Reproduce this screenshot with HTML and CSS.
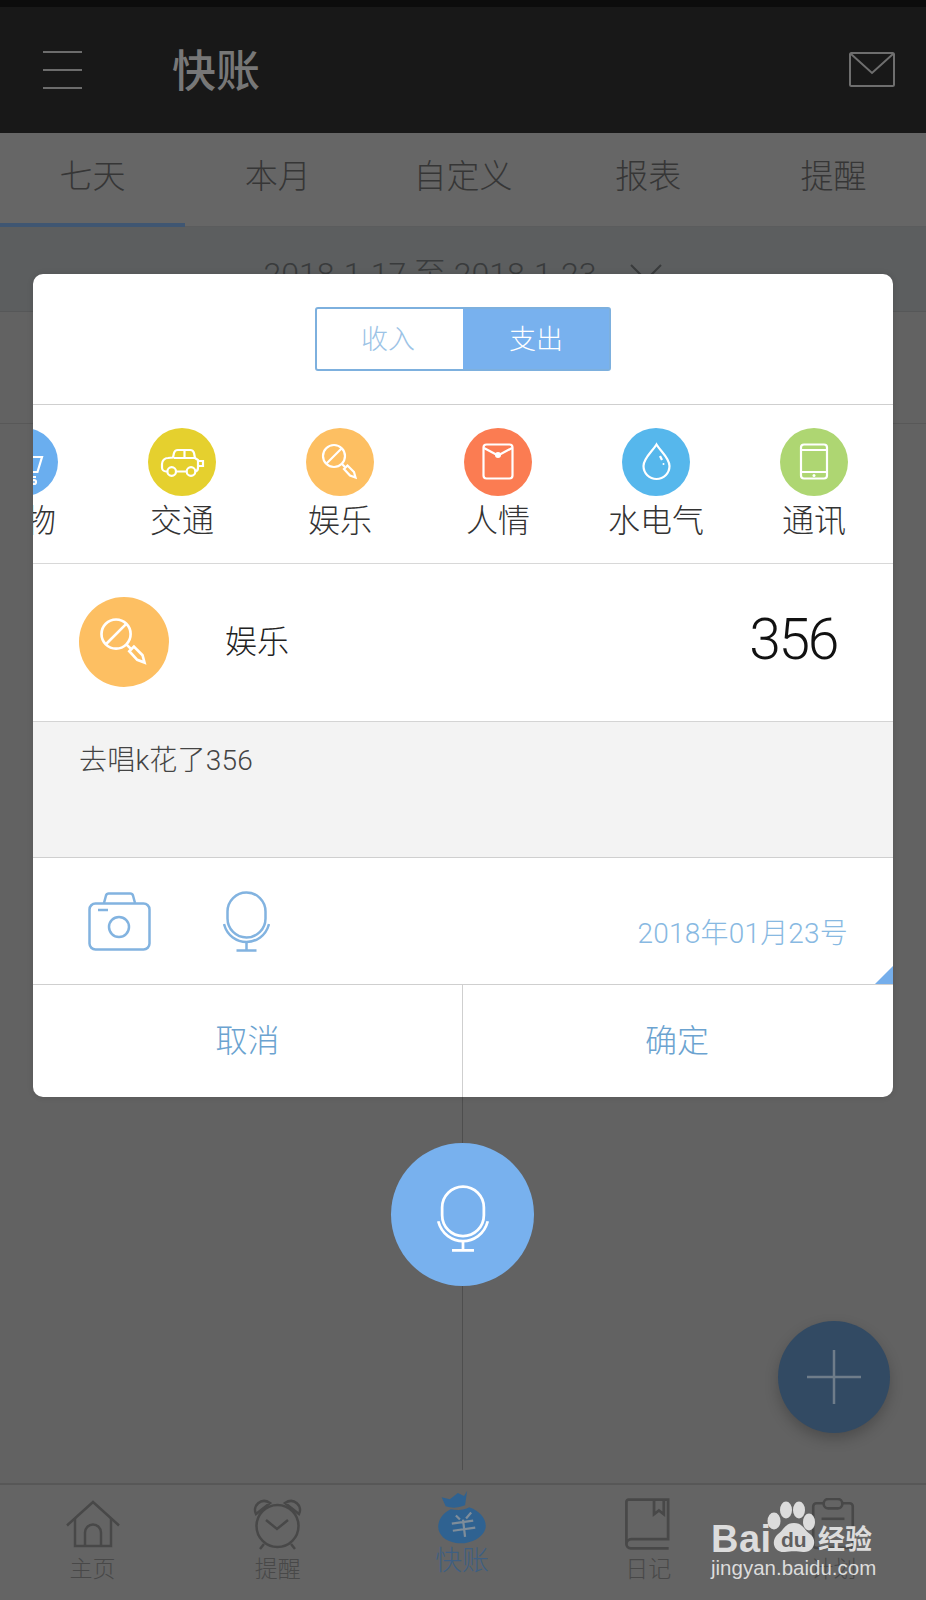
FILE: index.html
```html
<!DOCTYPE html>
<html lang="zh-CN">
<head>
<meta charset="utf-8">
<title>快账</title>
<link rel="stylesheet" href="styles.css">
</head>
<body>
<svg class="defs" width="0" height="0" aria-hidden="true">
  <symbol id="i-lolly" viewBox="0 0 68 68">
    <circle cx="28" cy="28" r="11"/>
    <path d="M20.500 35.500 35.500 20.500"/>
    <path d="M36 36 39 39"/>
    <path d="M38 41 41.500 37.500 48 44 49.500 49.500 44 47.500Z"/>
  </symbol>
  <symbol id="i-mic" viewBox="0 0 47 61">
    <rect x="4.500" y="1.500" width="38" height="45" rx="19"/>
    <path d="M1 33C4 45 14 51 23.500 51S43 45 46 33"/>
    <path d="M23.500 51V59M13.500 59.500H33.500"/>
  </symbol>
</svg>

<div class="app">
  <div class="statusbar"></div>
  <header class="topbar">
    <svg class="burger" viewBox="0 0 40 38"><path d="M0 1H39M0 19H39M0 37H39"/></svg>
    <h1 class="title">快账</h1>
    <svg class="mail" viewBox="0 0 46 35"><rect x="1" y="1" width="44" height="33" rx="1.500"/><path d="M2 2 23 21 44 2"/></svg>
  </header>

  <nav class="tabs">
    <div class="tab tab-active">七天</div>
    <div class="tab">本月</div>
    <div class="tab">自定义</div>
    <div class="tab">报表</div>
    <div class="tab">提醒</div>
  </nav>

  <div class="daterow">
    <span class="daterange">2018-1-17 至 2018-1-23</span>
    <svg class="chevron" viewBox="0 0 32 18"><path d="M1 1 16 16 31 1"/></svg>
  </div>
  <div class="summary"></div>
  <div class="timeline"><div class="timeline-line"></div></div>

  <footer class="bottomnav">
    <div class="navitem">
      <svg class="navicon nav-home" viewBox="0 0 54 47"><path d="M1 25 27 1.500 53 25"/><path d="M9 18V45.500H45V18"/><path d="M19 45.500V32a8 8 0 0 1 16 0V45.500"/></svg>
      <span class="navlabel">主页</span>
    </div>
    <div class="navitem">
      <svg class="navicon nav-clock" viewBox="0 0 50 52"><circle cx="24.500" cy="28" r="21"/><path d="M13 22 24 31 35 22"/><path d="M3 16C-1 8 8-1 17 5ZM46 16C50 8 41-1 32 5Z"/><path d="M11 46 7 51M38 46 42 51"/></svg>
      <span class="navlabel">提醒</span>
    </div>
    <div class="navitem navitem-active">
      <svg class="navicon nav-bag" viewBox="0 0 48 53"><path class="bag-fill" d="M4 7 12 9 20 3 26 6 29 1 27 15C20 18 13 18 8 16Z"/><path class="bag-fill" d="M13 19C20 20 26 20 31 17 41 20 49 29 47 38 44 48 30 54 18 52 6 50-1 42 1 33 2 27 8 21 13 19Z"/><path class="bag-mark" d="M18 25 22 29M33 22 28 28M14 33 35 30M15 40 37 37M25 29 27 46"/></svg>
      <span class="navlabel">快账</span>
    </div>
    <div class="navitem">
      <svg class="navicon nav-book" viewBox="0 0 42 48"><path d="M2 43V3.500A2 2 0 0 1 4 1.500H40.500V38H6.500A4.500 4.500 0 0 0 2 42.500 4 4 0 0 0 6 46.500H41"/><path d="M27.500 2V15L32 11.500 36.500 15V2"/></svg>
      <span class="navlabel">日记</span>
    </div>
    <div class="navitem">
      <svg class="navicon nav-clip" viewBox="0 0 40 50"><path d="M11 5H4A3 3 0 0 0 1 8V45A3 3 0 0 0 4 48H36A3 3 0 0 0 39 45V8A3 3 0 0 0 36 5H29"/><rect x="11" y="1" width="18" height="9" rx="4.500"/><path d="M9 20H31"/></svg>
      <span class="navlabel">计划</span>
    </div>
  </footer>

  <button class="voicebtn" type="button" aria-label="语音">
    <svg class="voiceicon"><use href="#i-mic"/></svg>
  </button>
  <button class="fab" type="button" aria-label="添加">
    <svg class="fabicon" viewBox="0 0 54 54"><path d="M27 0V54M0 27H54"/></svg>
  </button>

  <section class="modal">
    <div class="modal-head">
      <div class="segment">
        <div class="seg seg-off">收入</div>
        <div class="seg seg-on">支出</div>
      </div>
    </div>

    <div class="cats">
      <div class="cat">
        <div class="catcircle c-blue">
          <svg class="caticon" viewBox="0 0 68 68"><path d="M20 29H52L47.500 44H26M26 49H46"/><circle cx="30" cy="54" r="2"/><circle cx="44" cy="54" r="2"/></svg>
        </div>
        <div class="catname">购物</div>
      </div>
      <div class="cat">
        <div class="catcircle c-yellow">
          <svg class="caticon" viewBox="0 0 68 68"><path d="M19.500 43.500H18A4 4 0 0 1 14 39.500V36A6 6 0 0 1 20 30L25 29.500 26 25A4 4 0 0 1 30 22H42A4 4 0 0 1 46 25L47 30 50 32V39.500A4 4 0 0 1 47.500 43.500M28 43.500H39"/><path d="M26 30H47M36.500 22V30M50 33H55V38H50"/><circle cx="23.700" cy="43.500" r="4.300"/><circle cx="43" cy="43.500" r="4.300"/></svg>
        </div>
        <div class="catname">交通</div>
      </div>
      <div class="cat">
        <div class="catcircle c-orange"><svg class="caticon"><use href="#i-lolly"/></svg></div>
        <div class="catname">娱乐</div>
      </div>
      <div class="cat">
        <div class="catcircle c-red">
          <svg class="caticon" viewBox="0 0 68 68"><rect x="19.500" y="16.500" width="29" height="34" rx="3"/><path d="M20 20 34 27.500 48 20"/><circle class="dot" cx="34" cy="27" r="3"/></svg>
        </div>
        <div class="catname">人情</div>
      </div>
      <div class="cat">
        <div class="catcircle c-sky">
          <svg class="caticon" viewBox="0 0 68 68"><path d="M34.500 16.500C30 24 21.500 30 21.500 38A13 13 0 0 0 47.500 38C47.500 30 39 24 34.500 16.500Z"/><path d="M38 28 40 32"/><circle class="dot" cx="41.500" cy="36" r="1"/></svg>
        </div>
        <div class="catname">水电气</div>
      </div>
      <div class="cat">
        <div class="catcircle c-green">
          <svg class="caticon" viewBox="0 0 68 68"><rect x="21" y="16.500" width="26" height="34" rx="3"/><path d="M21 22H47M21 44H47"/><circle class="dot" cx="34" cy="47.500" r="1.500"/></svg>
        </div>
        <div class="catname">通讯</div>
      </div>
    </div>

    <div class="entry">
      <div class="entrycircle c-orange"><svg class="entryicon"><use href="#i-lolly"/></svg></div>
      <div class="entryname">娱乐</div>
      <div class="entryamount">356</div>
    </div>

    <div class="note">去唱k花了356</div>

    <div class="tools">
      <svg class="camera" viewBox="0 0 63 59"><rect x="1.500" y="11.500" width="60" height="46" rx="6"/><path d="M16 11 18 3.500A3 3 0 0 1 21 1.500H42A3 3 0 0 1 45 3.500L47 11"/><circle cx="31" cy="35" r="10"/><path d="M10 18H20"/></svg>
      <svg class="micsmall"><use href="#i-mic"/></svg>
      <div class="datestamp">2018年01月23号</div>
      <div class="corner"></div>
    </div>

    <div class="actions">
      <div class="action">取消</div>
      <div class="action">确定</div>
    </div>
  </section>

  <div class="watermark">
    <div class="wm-top">
      <span class="wm-bai">Bai</span>
      <span class="wm-paw">
        <svg class="wm-pawsvg" viewBox="0 0 50 54"><ellipse cx="7" cy="21" rx="6.500" ry="8.500"/><ellipse cx="19" cy="10" rx="6" ry="8.500"/><ellipse cx="32" cy="10" rx="6" ry="8.500"/><ellipse cx="42" cy="22" rx="6" ry="8.500"/><path d="M27 23C36 23 37 30 43 34 51 40 47 53 36 52 31 51 23 51 18 52 7 53 3 41 11 34 17 30 18 23 27 23Z"/></svg>
        <span class="wm-du">du</span>
      </span>
      <span class="wm-jy">经验</span>
    </div>
    <div class="wm-url">jingyan.baidu.com</div>
  </div>
</div>
</body>
</html>
```

FILE: styles.css
```css
* { box-sizing: border-box; }

html, body {
  margin: 0;
  padding: 0;
  background: #626262;
}

body {
  font-family: "Noto Sans CJK SC", "Liberation Sans", sans-serif;
  font-weight: 300;
}

.defs { position: absolute; }

.app {
  position: relative;
  width: 926px;
  height: 1600px;
  overflow: hidden;
  display: flex;
  flex-direction: column;
  background: #626262;
}

.statusbar { height: 7px; background: #0c0c0c; }

.topbar {
  height: 126px;
  background: #181818;
  display: flex;
  align-items: center;
  padding: 0 31px 0 43px;
}

.burger { width: 40px; height: 38px; fill: none; stroke: #6c6c6c; stroke-width: 2; }

.title {
  margin: 0 0 4px 89px;
  font-size: 44px;
  line-height: 60px;
  font-weight: 500;
  color: #777;
  flex: 1;
}

.mail { width: 46px; height: 35px; margin-bottom: 2px; fill: none; stroke: #6e6e6e; stroke-width: 2; }

.tabs {
  height: 94px;
  display: grid;
  grid-template-columns: repeat(5, 1fr);
  background: #666;
  border-bottom: 1px solid #5b5c5d;
}

.tab {
  display: flex;
  align-items: center;
  justify-content: center;
  padding-bottom: 11px;
  font-size: 33px;
  color: #363636;
}

.tab-active {
  border-bottom: 4px solid #3f5672;
  margin-bottom: -1px;
  padding-bottom: 8px;
}

.daterow {
  height: 85px;
  background: #5c5e5f;
  border-bottom: 1px solid #565758;
  display: flex;
  align-items: center;
  justify-content: center;
  gap: 34px;
  padding-top: 3px;
}

.daterange {
  font-family: Roboto, "Noto Sans CJK SC", sans-serif;
  font-weight: 300;
  font-size: 32px;
  color: #393b3c;
}

.chevron { width: 32px; height: 18px; margin-top: 5px; fill: none; stroke: #393b3c; stroke-width: 2; }

.summary {
  height: 112px;
  background: #626262;
  border-bottom: 1px solid #585858;
}

.timeline {
  flex: 1;
  display: flex;
  justify-content: center;
  padding: 0 1px 13px 0;
}

.timeline-line { width: 1px; background: #4e4e4e; }

.bottomnav {
  height: 117px;
  background: #646464;
  border-top: 2px solid #575757;
  display: grid;
  grid-template-columns: repeat(5, 1fr);
}

.navitem {
  display: flex;
  flex-direction: column;
  align-items: center;
  padding-top: 13px;
  color: #484848;
}

.navitem-active { padding-top: 5px; color: #3e5f82; }

.navicon { height: 52px; width: 54px; fill: none; stroke: #484848; stroke-width: 2.500; }

.nav-book { margin-left: -2px; }

.nav-bag { height: 54px; stroke: none; margin-left: -2px; }
.bag-fill { fill: #2f6291; }
.bag-mark { fill: none; stroke: #7f8d9a; stroke-width: 2.200; }

.navlabel { font-size: 23px; line-height: 30px; margin-top: 2px; }

.navitem-active .navlabel { font-size: 27px; line-height: 34px; margin-top: -2px; margin-left: -2px; }

.voicebtn {
  position: absolute;
  left: 391px;
  top: 1143px;
  width: 143px;
  height: 143px;
  padding: 0;
  border: 0;
  border-radius: 50%;
  background: #78b1ee;
  display: flex;
  align-items: center;
  justify-content: center;
}

.voiceicon { width: 52px; height: 67px; margin-top: 8px; fill: none; stroke: #fff; stroke-width: 2.500; }

.fab {
  position: absolute;
  left: 778px;
  top: 1321px;
  width: 112px;
  height: 112px;
  padding: 0;
  border: 0;
  border-radius: 50%;
  background: #324a63;
  box-shadow: 0 6px 14px rgba(0, 0, 0, .22);
  display: flex;
  align-items: center;
  justify-content: center;
}

.fabicon { width: 54px; height: 54px; fill: none; stroke: #6f7d8a; stroke-width: 2.500; }

.modal {
  position: absolute;
  left: 33px;
  top: 274px;
  width: 860px;
  height: 823px;
  background: #fff;
  border-radius: 10px;
  overflow: hidden;
  display: flex;
  flex-direction: column;
  box-shadow: 0 0 6px rgba(0, 0, 0, .12);
}

.modal-head {
  height: 131px;
  border-bottom: 1px solid #cfcfcf;
  display: flex;
  justify-content: center;
  padding-top: 33px;
}

.segment {
  width: 296px;
  height: 64px;
  display: flex;
  border: 2px solid #7db0de;
  border-radius: 3px;
}

.seg {
  flex: 0 0 50%;
  display: flex;
  align-items: center;
  justify-content: center;
  padding-bottom: 4px;
  font-size: 27px;
}

.seg-off { color: #9cc3e6; padding-right: 4px; }
.seg-on { background: #78b1ee; color: #fff; }

.cats {
  height: 159px;
  border-bottom: 1px solid #d8d8d8;
  display: flex;
  margin-left: -88px;
  padding-top: 23px;
}

.modal .cats { width: 948px; }

.cat {
  flex: 0 0 158px;
  display: flex;
  flex-direction: column;
  align-items: center;
}

.catcircle {
  width: 68px;
  height: 68px;
  border-radius: 50%;
}

.c-blue { background: #6aaeef; }
.c-yellow { background: #e5d02e; }
.c-orange { background: #fdbf62; }
.c-red { background: #fb7c52; }
.c-sky { background: #56b7ec; }
.c-green { background: #aed672; }

.caticon {
  display: block;
  width: 68px;
  height: 68px;
  fill: none;
  stroke: #fff;
  stroke-width: 2.200;
}

.caticon .dot { fill: #fff; stroke: none; }

.catname {
  font-size: 32px;
  line-height: 46px;
  color: #333;
  margin-top: -1px;
  white-space: nowrap;
}

.entry {
  height: 158px;
  border-bottom: 1px solid #d4d4d4;
  display: flex;
  align-items: center;
  padding: 0 56px 0 46px;
}

.entrycircle {
  width: 90px;
  height: 90px;
  margin-top: -2px;
  border-radius: 50%;
}

.entryicon {
  display: block;
  width: 90px;
  height: 90px;
  fill: none;
  stroke: #fff;
  stroke-width: 2;
}

.entryname {
  flex: 1;
  margin: 0 0 8px 56px;
  font-size: 32px;
  color: #222;
}

.entryamount {
  font-family: Roboto, "Liberation Sans", sans-serif;
  font-weight: 300;
  font-size: 57px;
  line-height: 70px;
  letter-spacing: -2.400px;
  margin-bottom: 6px;
  color: #111;
}

.note {
  height: 136px;
  background: #f3f3f3;
  border-bottom: 1px solid #cfcfcf;
  padding: 15px 0 0 46px;
  font-family: Roboto, "Noto Sans CJK SC", sans-serif;
  font-size: 28px;
  line-height: 48px;
  letter-spacing: .2px;
  color: #444;
}

.tools {
  position: relative;
  height: 127px;
  border-bottom: 1px solid #cfcfcf;
  display: flex;
  align-items: flex-start;
  padding: 33px 45px 0 55px;
}

.camera {
  width: 63px;
  height: 59px;
  margin-top: 1px;
  fill: none;
  stroke: #82b3e0;
  stroke-width: 2.500;
}

.micsmall {
  width: 47px;
  height: 61px;
  margin-left: 72px;
  fill: none;
  stroke: #82b3e0;
  stroke-width: 2.500;
}

.datestamp {
  margin-left: auto;
  margin-top: 23px;
  font-family: Roboto, "Noto Sans CJK SC", sans-serif;
  font-weight: 300;
  font-size: 28px;
  line-height: 40px;
  letter-spacing: .2px;
  color: #88b9e2;
}

.corner {
  position: absolute;
  right: 0;
  bottom: 0;
  width: 0;
  height: 0;
  border-style: solid;
  border-width: 0 0 18px 18px;
  border-color: transparent transparent #75aeeb transparent;
}

.actions {
  flex: 1;
  display: grid;
  grid-template-columns: 429px 431px;
}

.action {
  display: flex;
  align-items: center;
  justify-content: center;
  font-size: 32px;
  color: #6ba3d0;
  padding-bottom: 7px;
}

.action + .action { border-left: 1px solid #cfcfcf; padding-right: 2px; }

.watermark {
  position: absolute;
  left: 711px;
  top: 1500px;
  width: 170px;
  color: #dcdcdc;
}

.wm-top {
  position: relative;
  height: 54px;
  display: flex;
  align-items: flex-end;
}

.wm-bai {
  font-family: "Liberation Sans", sans-serif;
  font-weight: 700;
  font-size: 38px;
  line-height: 46px;
  width: 56px;
  margin-bottom: -8px;
  letter-spacing: .5px;
}

.wm-paw {
  position: relative;
  flex: none;
  width: 50px;
  height: 54px;
}

.wm-pawsvg {
  position: absolute;
  left: 0;
  top: 0;
  width: 50px;
  height: 54px;
  fill: #dcdcdc;
}

.wm-du {
  position: absolute;
  left: 14px;
  top: 28px;
  font-family: "Liberation Sans", sans-serif;
  font-weight: 700;
  font-size: 21px;
  line-height: 24px;
  color: #5f5f5f;
}

.wm-jy {
  font-weight: 700;
  font-size: 27px;
  line-height: 44px;
  margin: 0 0 -6px 1px;
  white-space: nowrap;
}

.wm-url {
  font-family: "Liberation Sans", sans-serif;
  font-weight: 400;
  font-size: 20.500px;
  line-height: 28px;
}
```
